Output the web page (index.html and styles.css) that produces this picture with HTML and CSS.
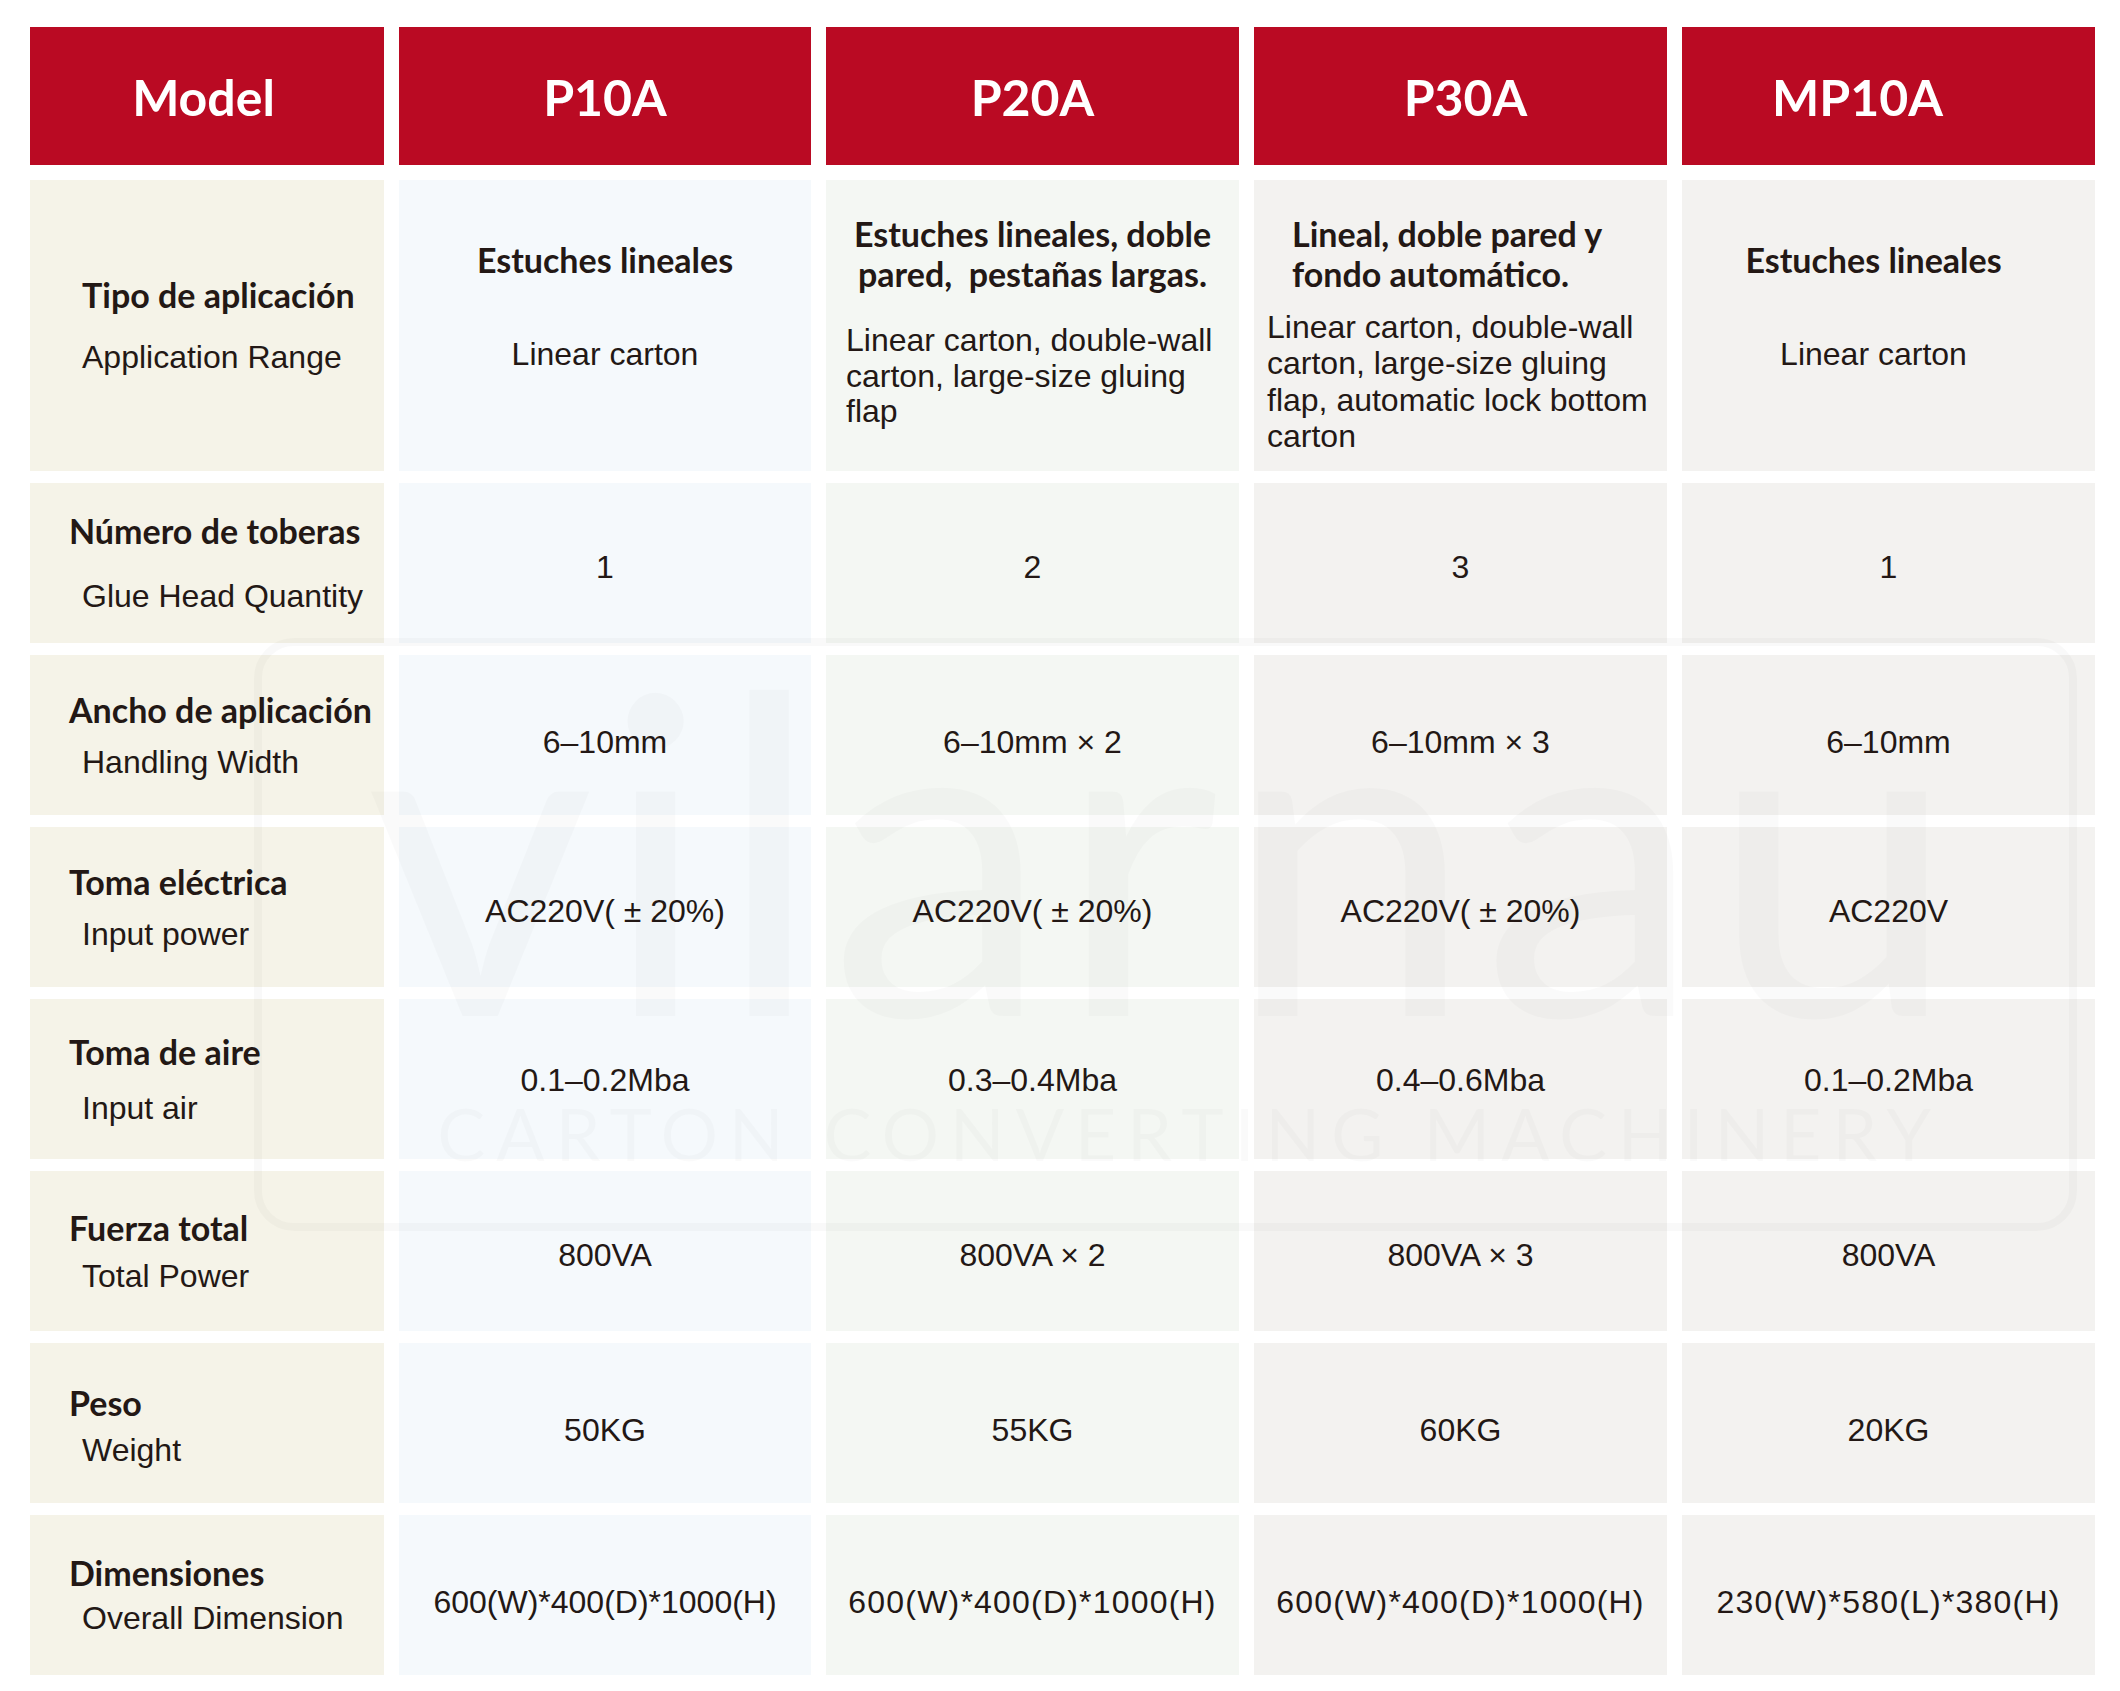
FILE: index.html
```html
<!DOCTYPE html>
<html lang="es">
<head>
<meta charset="utf-8">
<title>Especificaciones</title>
<link rel="stylesheet" href="styles.css">
</head>
<body>
<div class="page">
  <div class="head">
    <div class="hc hc-model">Model</div>
    <div class="hc">P10A</div>
    <div class="hc">P20A</div>
    <div class="hc hc-p30">P30A</div>
    <div class="hc hc-mp">MP10A</div>
  </div>

  <div class="grid">
    <!-- row 1 -->
    <div class="c lab"><div class="es ind">Tipo de aplicación</div><div class="en g60">Application Range</div></div>
    <div class="c p10 top1"><div class="es">Estuches lineales</div><div class="en gap1">Linear carton</div></div>
    <div class="c p20 top2"><div class="es tall center">Estuches lineales, doble<br>pared,&nbsp; pestañas largas.</div><div class="en r20">Linear carton, double-wall<br>carton, large-size gluing<br>flap</div></div>
    <div class="c p30 top2"><div class="es tall left38">Lineal, doble pared y<br>fondo automático.</div><div class="en r30">Linear carton, double-wall<br>carton, large-size gluing<br>flap, automatic lock bottom<br>carton</div></div>
    <div class="c mp top1 shift"><div class="es">Estuches lineales</div><div class="en gap1">Linear carton</div></div>

    <!-- row 2 -->
    <div class="c lab"><div class="es">Número de toberas</div><div class="en g63">Glue Head Quantity</div></div>
    <div class="c p10 v">1</div>
    <div class="c p20 v">2</div>
    <div class="c p30 v">3</div>
    <div class="c mp v">1</div>

    <!-- row 3 -->
    <div class="c lab"><div class="es">Ancho de aplicación</div><div class="en g50">Handling Width</div></div>
    <div class="c p10 v lo">6–10mm</div>
    <div class="c p20 v lo">6–10mm × 2</div>
    <div class="c p30 v lo">6–10mm × 3</div>
    <div class="c mp v lo">6–10mm</div>

    <!-- row 4 -->
    <div class="c lab"><div class="es">Toma eléctrica</div><div class="en g50">Input power</div></div>
    <div class="c p10 v">AC220V( ± 20%)</div>
    <div class="c p20 v">AC220V( ± 20%)</div>
    <div class="c p30 v">AC220V( ± 20%)</div>
    <div class="c mp v">AC220V</div>

    <!-- row 5 -->
    <div class="c lab"><div class="es">Toma de aire</div><div class="en g54">Input air</div></div>
    <div class="c p10 v hi">0.1–0.2Mba</div>
    <div class="c p20 v hi">0.3–0.4Mba</div>
    <div class="c p30 v hi">0.4–0.6Mba</div>
    <div class="c mp v hi">0.1–0.2Mba</div>

    <!-- row 6 -->
    <div class="c lab"><div class="es">Fuerza total</div><div class="en g46">Total Power</div></div>
    <div class="c p10 v">800VA</div>
    <div class="c p20 v">800VA × 2</div>
    <div class="c p30 v">800VA × 3</div>
    <div class="c mp v">800VA</div>

    <!-- row 7 -->
    <div class="c lab lablo"><div class="es">Peso</div><div class="en g45">Weight</div></div>
    <div class="c p10 v lo">50KG</div>
    <div class="c p20 v lo">55KG</div>
    <div class="c p30 v lo">60KG</div>
    <div class="c mp v lo">20KG</div>

    <!-- row 8 -->
    <div class="c lab"><div class="es">Dimensiones</div><div class="en g43">Overall Dimension</div></div>
    <div class="c p10 v lo">600(W)*400(D)*1000(H)</div>
    <div class="c p20 v lo sp">600(W)*400(D)*1000(H)</div>
    <div class="c p30 v lo sp">600(W)*400(D)*1000(H)</div>
    <div class="c mp v lo sp">230(W)*580(L)*380(H)</div>
  </div>

  <div class="wm" aria-hidden="true">
    <div class="wm-name">vilarnau</div>
    <div class="wm-tag">CARTON CONVERTING MACHINERY</div>
  </div>
</div>
</body>
</html>
```

FILE: styles.css
```css
html, body {
  margin: 0;
  padding: 0;
  background: #ffffff;
}

.page {
  position: relative;
  width: 2120px;
  height: 1691px;
  box-sizing: border-box;
  padding: 27px 0 0 30px;
  color: #231815;
  font-family: "Liberation Sans", Arial, sans-serif;
}

.head,
.grid {
  display: grid;
  grid-template-columns: 354px 412px 413px 413px 413px;
  column-gap: 15px;
}

.head {
  height: 138px;
  margin-bottom: 15px;
}

.hc {
  background: #ba0a23;
  color: #ffffff;
  font-family: Lato, "Open Sans", sans-serif;
  font-weight: 700;
  font-size: 50px;
  display: flex;
  align-items: center;
  justify-content: center;
  padding-top: 2px;
}

.hc-model { padding-right: 7px; }
.hc-p30 { padding-left: 10px; }
.hc-mp { padding-right: 62px; }

.grid {
  grid-template-rows: 291px repeat(7, 160px);
  row-gap: 12px;
}

.c {
  box-sizing: border-box;
  display: flex;
  flex-direction: column;
}

.lab { background: #f5f3e8; justify-content: center; padding-left: 39px; }
.lablo { padding-top: 6px; }
.p10 { background: #f5f9fc; }
.p20 { background: #f4f7f3; }
.p30 { background: #f3f2f0; }
.mp  { background: #f3f2f0; }

.es {
  font-family: Lato, "Open Sans", sans-serif;
  font-weight: 700;
  font-size: 34px;
  line-height: 1;
  white-space: nowrap;
}

.en {
  font-size: 32px;
  line-height: 1;
  margin-left: 13px;
  white-space: nowrap;
}

.ind { margin-left: 13px; }

.g60 { margin-top: 29px; }
.g63 { margin-top: 32px; }
.g54 { margin-top: 23px; }
.g50 { margin-top: 19px; }
.g46 { margin-top: 15px; }
.g45 { margin-top: 14px; }
.g43 { margin-top: 12px; }

/* values */
.v {
  align-items: center;
  justify-content: center;
  padding-top: 8px;
  font-size: 32px;
  white-space: nowrap;
}

.v.lo { padding-top: 14px; }
.v.hi { padding-top: 2px; }

.sp { letter-spacing: 1.2px; }

/* row 1 column layouts */
.top1 {
  align-items: center;
  padding-top: 63px;
}

.top1 .en { margin-left: 0; }
.gap1 { margin-top: 61px; }

.shift { padding-right: 30px; }

.top2 {
  padding-top: 34px;
}

.tall { line-height: 40px; }
.center { text-align: center; }
.left38 { margin-left: 38px; }

.r20 {
  margin-top: 29px;
  margin-left: 20px;
  line-height: 35.5px;
}

.r30 {
  margin-top: 15px;
  margin-left: 13px;
  line-height: 36.3px;
}

/* watermark overlay */
.wm {
  position: absolute;
  left: 254px;
  top: 638px;
  width: 1823px;
  height: 593px;
  box-sizing: border-box;
  border: 8px solid rgba(0, 0, 0, 0.025);
  border-radius: 40px;
  display: flex;
  flex-direction: column;
  align-items: center;
  color: rgba(0, 0, 0, 0.018);
  pointer-events: none;
}

.wm-name {
  font-family: Lato, "Open Sans", sans-serif;
  font-weight: 400;
  font-size: 443px;
  line-height: 0.9;
  letter-spacing: 8px;
  white-space: nowrap;
}

.wm-tag {
  font-family: Lato, "Open Sans", sans-serif;
  font-weight: 400;
  font-size: 72px;
  line-height: 1;
  letter-spacing: 10.7px;
  margin-top: 52px;
  margin-left: 48px;
  white-space: nowrap;
}
```
